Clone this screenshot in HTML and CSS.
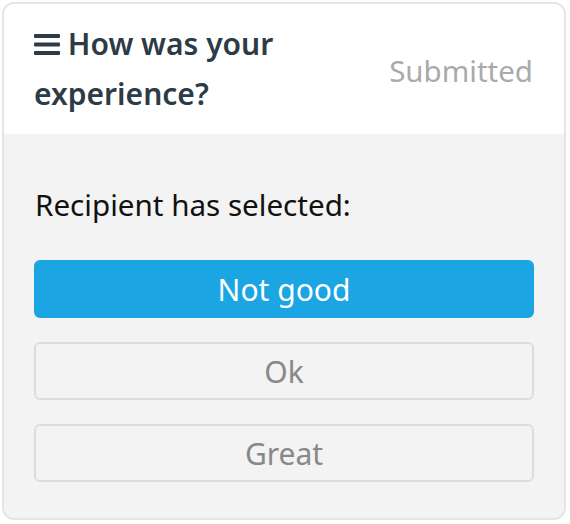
FILE: index.html
```html
<!DOCTYPE html>
<html>
<head>
<meta charset="utf-8">
<link rel="stylesheet" href="styles.css">
</head>
<body>
<div class="card">
  <div class="card-header">
    <h2 class="title"><svg class="menu-icon" width="26" height="21" viewBox="0 0 26 21"><rect x="0" y="0" width="26" height="4" rx="1"/><rect x="0" y="8.5" width="26" height="4" rx="1"/><rect x="0" y="17" width="26" height="4" rx="1"/></svg> How was your experience?</h2>
    <span class="status">Submitted</span>
  </div>
  <div class="card-body">
    <p class="prompt">Recipient has selected:</p>
    <div class="options">
      <div class="option selected">Not good</div>
      <div class="option">Ok</div>
      <div class="option">Great</div>
    </div>
  </div>
</div>
</body>
</html>
```

FILE: styles.css
```css
html, body {
  margin: 0;
  padding: 0;
  background: #ffffff;
}
body {
  padding: 2px;
  font-family: "Noto Sans", "Open Sans", sans-serif;
}
.card {
  width: 560px;
  height: 514px;
  border: 2px solid #e5e5e5;
  border-radius: 12px;
  overflow: hidden;
  background: #f3f3f3;
  display: flex;
  flex-direction: column;
}
.card-header {
  background: #ffffff;
  display: flex;
  justify-content: space-between;
  align-items: center;
  padding: 15px 31px 15px 30px;
  height: 100px;
}
.title {
  margin: 0;
  width: 320px;
  font-size: 30px;
  font-weight: 600;
  line-height: 50px;
  color: #2d3b46;
}
.menu-icon {
  fill: #2d3b46;
  vertical-align: baseline;
}
.status {
  font-size: 29.5px;
  line-height: 50px;
  color: #aaaaaa;
  margin-top: 4px;
}
.card-body {
  padding: 53px 30px 30px 30px;
}
.prompt {
  margin: 0 0 37px 1px;
  font-size: 29.6px;
  line-height: 36px;
  color: #111111;
}
.options {
  display: flex;
  flex-direction: column;
  gap: 24px;
}
.option {
  height: 54px;
  border: 2px solid #dddddd;
  border-radius: 6px;
  display: flex;
  align-items: center;
  justify-content: center;
  font-size: 30px;
  color: #888888;
}
.option.selected {
  background: #1ba5e2;
  border-color: #1ba5e2;
  color: #ffffff;
}
```
